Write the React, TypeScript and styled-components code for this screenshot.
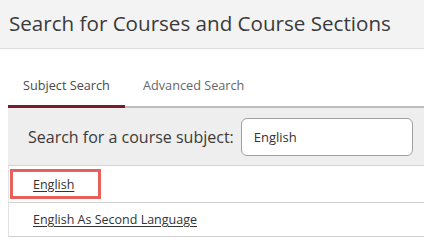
import React from "react";
import styled, { createGlobalStyle } from "styled-components";

const Global = createGlobalStyle`
  html, body { margin: 0; padding: 0; background: #fff; }
  body { font-family: "Open Sans", "Noto Sans", sans-serif; color: #333; }
  * { box-sizing: border-box; }
`;

const Page = styled.div`
  width: 424px;
  height: 245px;
  overflow: hidden;
  background: #fff;
`;

const Header = styled.header`
  height: 49px;
  background: #f3f3f3;
  border-bottom: 1px solid #dcdcdc;
  display: flex;
  align-items: center;
  padding: 0 0 2px 9px;
`;

const Title = styled.h1`
  margin: 0;
  font-size: 20.6px;
  font-weight: 400;
  color: #3a3a3a;
  white-space: nowrap;
`;

const Body = styled.div`
  padding: 0 0 0 8px;
`;

const Tabs = styled.div`
  display: flex;
  margin-top: 27px;
  border-bottom: 2px solid #bdbdbd;
`;

const Tab = styled.div<{ $active?: boolean }>`
  flex-shrink: 0;
  white-space: nowrap;
  padding: 0 0 11px ${(p) => (p.$active ? "15px" : "18px")};
  font-size: 12.7px;
  color: ${(p) => (p.$active ? "#4a4a4a" : "#666")};
  margin-bottom: -2px;
  border-bottom: 3px solid ${(p) => (p.$active ? "#7b1a2c" : "transparent")};
  width: ${(p) => (p.$active ? "117px" : "auto")};
`;

const SearchPanel = styled.div`
  background: #eeeeee;
  height: 58px;
  display: flex;
  align-items: center;
  padding-left: 20px;
  gap: 7px;
  border-bottom: 1px solid #d4d4d4;
`;

const Label = styled.label`
  flex-shrink: 0;
  white-space: nowrap;
  font-size: 16px;
  color: #3a3a3a;
`;

const Input = styled.div`
  flex-shrink: 0;
  width: 172px;
  height: 38px;
  background: #fff;
  border: 1px solid #a0a0a0;
  border-radius: 6px;
  display: flex;
  align-items: center;
  padding-left: 12px;
  font-size: 13px;
  color: #333;
`;

const List = styled.div`
  border-left: 1px solid #e2e2e2;
`;

const Row = styled.div<{ $h: number }>`
  height: ${(p) => p.$h}px;
  display: flex;
  align-items: center;
  padding-left: 1px;
  border-bottom: 1px solid #cfcfcf;
`;

const Highlight = styled.div<{ $on?: boolean }>`
  display: flex;
  align-items: center;
  height: 30px;
  width: ${(p) => (p.$on ? "91px" : "auto")};
  padding-left: 20px;
  border: 3px solid ${(p) => (p.$on ? "#e8605c" : "transparent")};
`;

const Link = styled.a`
  font-size: 12.5px;
  color: #333;
  text-decoration: underline;
  text-underline-offset: 2px;
  white-space: nowrap;
`;

export default function App() {
  return (
    <Page>
      <Global />
      <Header>
        <Title>Search for Courses and Course Sections</Title>
      </Header>
      <Body>
        <Tabs>
          <Tab $active>Subject Search</Tab>
          <Tab>Advanced Search</Tab>
        </Tabs>
        <SearchPanel>
          <Label>Search for a course subject:</Label>
          <Input>English</Input>
        </SearchPanel>
        <List>
          <Row $h={37}>
            <Highlight $on>
              <Link>English</Link>
            </Highlight>
          </Row>
          <Row $h={34}>
            <Highlight>
              <Link>English As Second Language</Link>
            </Highlight>
          </Row>
        </List>
      </Body>
    </Page>
  );
}
